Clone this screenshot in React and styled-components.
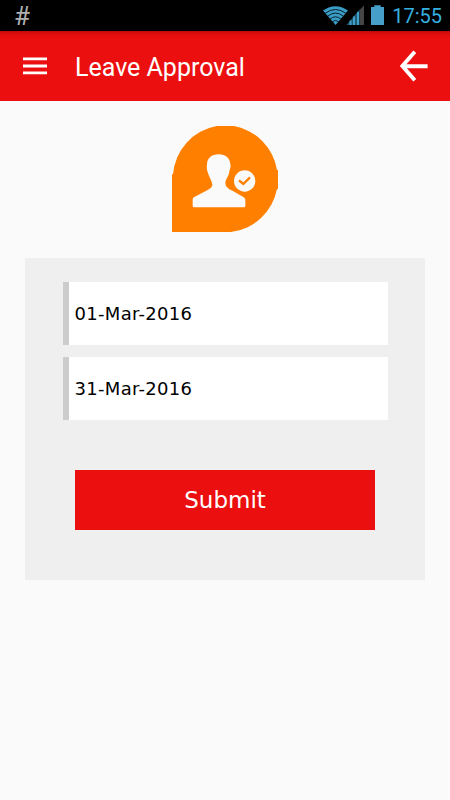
import React from 'react'
import styled, { createGlobalStyle } from 'styled-components'

const GlobalStyle = createGlobalStyle`
* {
    box-sizing: border-box;
}
body {
    margin: 0;
    background: #fafafa;
}
`

const StatusIcons = () => (
    <svg width="64" height="31" viewBox="0 0 64 31">
        <path d="M1 10.6 Q13.5 1.8 26 10.6 L13.6 25 Z" fill="#3a9cc4" />
        <g fill="none" stroke="#06202c" strokeWidth="1">
            <path d="M3 13.4 Q13.5 5.6 24 13.4" />
            <path d="M5.5 16.3 Q13.5 9.8 21.5 16.3" />
            <path d="M8 19.2 Q13.5 14.4 19 19.2" />
            <path d="M10.3 21.8 Q13.5 19 16.7 21.8" />
        </g>
        <path d="M37.5 10 L42 5.5 V25 H37.5 Z" fill="#454545" />
        <path d="M24.5 25 L37.5 9.6 V25 Z" fill="#1f5b75" />
        <path d="M28.5 20.5 V25 M32 16.5 V25 M36 12 V25" stroke="#3fa0c8" strokeWidth="2" />
        <path d="M49 7 H52.3 V5.3 H58.7 V7 H62 V25 H49 Z" fill="#469fc8" />
    </svg>
)

const MenuIcon = () => (
    <svg width="24" height="18" viewBox="0 0 24 18">
        <path d="M0 1.9 H24 M0 9 H24 M0 15.8 H24" stroke="#fff" strokeWidth="2.8" />
    </svg>
)

const BackIcon = () => (
    <svg width="28" height="32" viewBox="0 0 28 32">
        <path d="M14.8 1.8 L2.4 16 L14.8 30.2 M2.4 16.2 H27.6" fill="none" stroke="#fff" strokeWidth="3.9" />
    </svg>
)

const ApprovalLogo = () => (
    <svg width="106" height="106" viewBox="36 33 318 318">
        <path
            d="M36 178 H39 A160 160 0 0 1 170 33 H222 A160 160 0 0 1 351 165 H354 V222 H351 A160 160 0 0 1 213 351 H36 Z"
            fill="#ff8000"
        />
        <path
            d="M176 118 C197 118 210 130 211 147 C213 153 211 162 208 168 C208 183 197 190 196 204 C197 219 210 223 220 229 L250 246 Q256 249 256 254 V272 Q256 277 251 277 H103 Q98 277 98 272 V253 Q98 249 103 246 L133 230 C145 224 156 219 157 209 C156 197 146 184 143 171 C140 163 140 155 141 149 C141 130 155 118 176 118 Z"
            fill="#fafafa"
        />
        <circle cx="254" cy="198" r="32" fill="#fafafa" />
        <path d="M237 196 L250 207 L270 187" fill="none" stroke="#ff8000" strokeWidth="7" />
    </svg>
)

const App = () => {
    return (
        <Screen>
            <GlobalStyle />
            <StatusBar>
                <Hash>#</Hash>
                <StatusIcons />
                <Clock>17:55</Clock>
            </StatusBar>
            <Header>
                <MenuIcon />
                <Title>Leave Approval</Title>
                <BackIcon />
            </Header>
            <Content>
                <ApprovalLogo />
                <Form>
                    <DateField>01-Mar-2016</DateField>
                    <DateField>31-Mar-2016</DateField>
                    <Submit>Submit</Submit>
                </Form>
            </Content>
        </Screen>
    )
}

export default App

const Screen = styled.div`
width: 450px;
height: 800px;
overflow: hidden;
background: #fafafa;
`

const StatusBar = styled.div`
display: flex;
align-items: center;
height: 31px;
padding-left: 14px;
padding-right: 8px;
background: #000;
font-family: Roboto, sans-serif;
`

const Hash = styled.div`
flex: 1;
padding-top: 2px;
color: #b0b0b0;
font-size: 26px;
line-height: 31px;
`

const Clock = styled.div`
width: 51px;
margin-left: 5px;
color: #35b1e0;
font-size: 20px;
line-height: 32px;
text-align: right;
white-space: nowrap;
`

const Header = styled.div`
display: flex;
align-items: center;
height: 70px;
padding: 0 22px 0 23px;
background: linear-gradient(#bd0b0b 0, #da0d0d 2px, #eb0f0f 7px);
`

const Title = styled.div`
flex: 1;
padding-top: 4px;
padding-left: 28px;
color: #fff;
font-family: Roboto, sans-serif;
font-size: 25px;
line-height: 30px;
white-space: nowrap;
`

const Content = styled.div`
display: flex;
flex-direction: column;
align-items: center;
padding-top: 25px;
`

const Form = styled.div`
display: flex;
flex-direction: column;
align-items: center;
width: 400px;
height: 322px;
margin-top: 26px;
padding-top: 24px;
background: #efefef;
`

const DateField = styled.div`
width: 325px;
height: 63px;
margin-bottom: 12px;
padding-left: 6px;
border-left: 6px solid #ccc;
background: #fff;
color: #000;
font-family: 'DejaVu Sans', Verdana, sans-serif;
font-size: 18px;
letter-spacing: 0.3px;
line-height: 63px;
`

const Submit = styled.button`
width: 300px;
height: 60px;
margin-top: 38px;
padding: 0;
border: none;
background: #eb0f0f;
color: #fff;
font-family: 'DejaVu Sans', Verdana, sans-serif;
font-size: 23px;
line-height: 60px;
`
